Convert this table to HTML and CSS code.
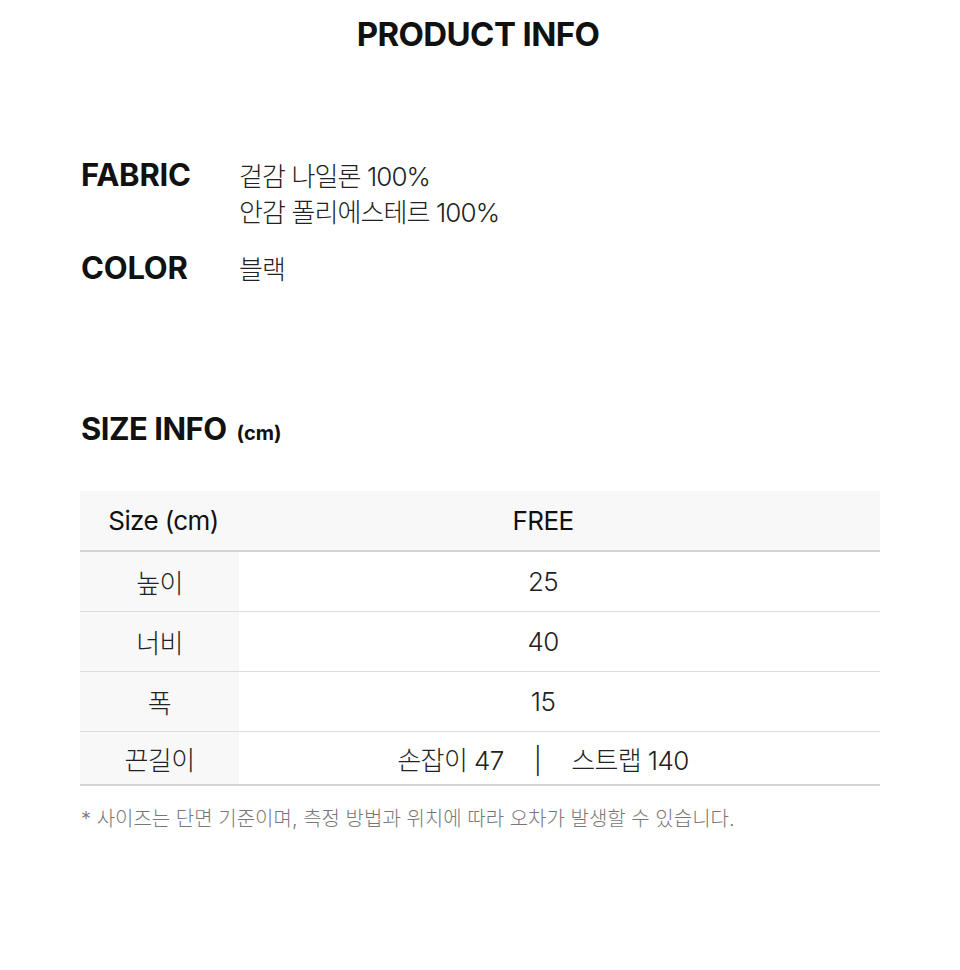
FILE: index.html
```html
<!DOCTYPE html>
<html lang="ko">
<head>
<meta charset="utf-8">
<link rel="stylesheet" href="styles.css">
</head>
<body>
<main class="page">
  <h1 class="title">PRODUCT INFO</h1>

  <section class="info">
    <div class="info-row">
      <div class="info-label">FABRIC</div>
      <div class="info-value">겉감 나일론 100%<br>안감 폴리에스테르 100%</div>
    </div>
    <div class="info-row">
      <div class="info-label">COLOR</div>
      <div class="info-value">블랙</div>
    </div>
  </section>

  <h2 class="size-title">SIZE INFO <span class="unit">(cm)</span></h2>

  <table class="size-table">
    <thead>
      <tr><th class="col-label">Size (cm)</th><th class="col-value">FREE</th></tr>
    </thead>
    <tbody>
      <tr><td class="col-label">높이</td><td class="col-value">25</td></tr>
      <tr><td class="col-label">너비</td><td class="col-value">40</td></tr>
      <tr><td class="col-label">폭</td><td class="col-value">15</td></tr>
      <tr><td class="col-label">끈길이</td><td class="col-value">손잡이 47<span class="sep">|</span>스트랩 140</td></tr>
    </tbody>
  </table>

  <p class="note">* 사이즈는 단면 기준이며, 측정 방법과 위치에 따라 오차가 발생할 수 있습니다.</p>
</main>
</body>
</html>
```

FILE: styles.css
```css
html, body {
  margin: 0;
  padding: 0;
  background: #ffffff;
}

body {
  font-family: Inter, "Noto Sans CJK KR", sans-serif;
  color: #111111;
}

.page {
  width: 800px;
  margin: 0 auto;
  padding: 14px 0 0 0;
}

.title {
  margin: 0;
  padding-right: 4px;
  text-align: center;
  font-size: 33px;
  font-weight: 700;
  letter-spacing: -0.6px;
  line-height: 40px;
}

.info {
  margin-top: 103px;
  display: flex;
  flex-direction: column;
  gap: 19px;
}

.info-row {
  display: flex;
}

.info-label {
  width: 158px;
  font-size: 31px;
  font-weight: 700;
  letter-spacing: -0.2px;
  line-height: 36px;
  padding-left: 1px;
}

.info-value {
  font-family: Inter, "Noto Sans CJK KR", sans-serif;
  font-size: 26px;
  font-weight: 300;
  line-height: 36px;
  letter-spacing: -0.9px;
  color: #222;
  padding-top: 2px;
}

.size-title {
  margin: 123px 0 0 1px;
  font-size: 31px;
  font-weight: 700;
  letter-spacing: -0.5px;
  line-height: 36px;
}

.size-title .unit {
  font-size: 20px;
  letter-spacing: 0;
  margin-left: 3px;
}

.size-table {
  margin-top: 40px;
  width: 800px;
  border-collapse: collapse;
  font-family: Inter, "Noto Sans CJK KR", sans-serif;
  font-weight: 300;
  font-size: 26px;
  color: #222;
}

.size-table th {
  background: #f8f8f8;
  font-weight: 400;
  height: 59px;
  padding: 0;
  border-bottom: 2px solid #d4d4d4;
  color: #111;
  letter-spacing: -0.6px;
}

.size-table td {
  height: 59px;
  padding: 0;
  text-align: center;
  border-bottom: 1px solid #dcdcdc;
  letter-spacing: -0.6px;
}

.size-table tbody tr:last-child td {
  height: 52px;
  border-bottom: 2px solid #d4d4d4;
}

.size-table td.col-label {
  width: 159px;
  background: #f8f8f8;
}

.size-table th.col-label {
  width: 151px;
  padding-left: 8px;
}

.size-table .col-value {
  padding-right: 33px;
}

.sep {
  display: inline-block;
  margin: 0 30px;
}

.note {
  margin: 17px 0 0 1px;
  font-family: Inter, "Noto Sans CJK KR", sans-serif;
  font-weight: 300;
  font-size: 20px;
  color: #777;
  letter-spacing: 0;
}
```
